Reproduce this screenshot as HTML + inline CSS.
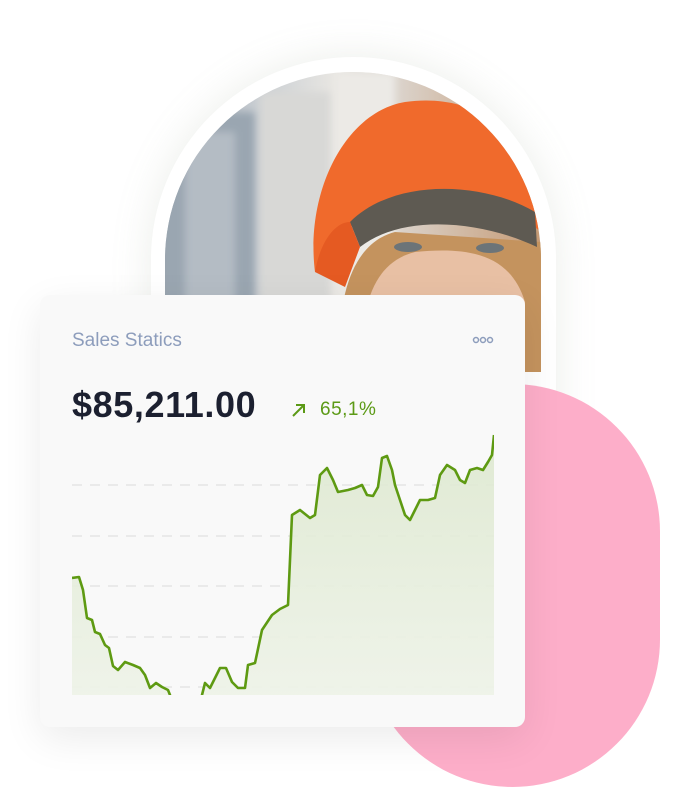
<!DOCTYPE html>
<html><head><meta charset="utf-8"><style>
body{margin:0;width:683px;height:811px;background:#fff;position:relative;overflow:hidden;font-family:"Liberation Sans",sans-serif}
.arch{position:absolute;left:151px;top:57px;width:405px;height:380px;background:#fff;border-radius:202px 202px 0 0;box-shadow:0 0 40px rgba(150,160,140,.18)}
.photo{position:absolute;left:165px;top:72px;width:376px;height:300px;border-radius:188px 188px 0 0;overflow:hidden;background:linear-gradient(90deg,#9aa3ad 0%,#c9ced3 25%,#e8e6e2 45%,#dcd6d0 60%,#c59a74 100%)}
.pink{position:absolute;left:365px;top:384px;width:295px;height:403px;border-radius:150px;background:#fdaec9}
.card{position:absolute;left:40px;top:295px;width:485px;height:432px;background:#f9f9f9;border-radius:10px;box-shadow:0 12px 40px rgba(0,0,0,.08)}
</style></head><body>
<div class="arch"></div>
<div class="photo">
<svg width="376" height="300" viewBox="0 0 376 300">
<g filter="url(#b)">
<rect x="0" y="40" width="90" height="260" fill="#9aa6b1"/>
<rect x="20" y="60" width="50" height="240" fill="#b4bcc4"/>
<rect x="95" y="20" width="70" height="280" fill="#d8d8d6"/>
<rect x="170" y="0" width="60" height="300" fill="#eceae6"/>
</g>
<defs><filter id="b"><feGaussianBlur stdDeviation="4"/></filter></defs>
<path d="M175 300 C170 220 190 170 230 160 L376 170 L376 300 Z" fill="#c4935e"/>
<path d="M195 300 C195 230 210 190 250 180 C300 175 345 180 360 230 L360 300 Z" fill="#e8c0a4"/>
<path d="M150 200 C140 120 180 40 240 30 C310 20 360 60 372 120 L376 160 C330 120 240 110 190 150 Z" fill="#f06a2c"/>
<path d="M185 150 C230 105 320 110 370 140 L372 175 C320 150 240 140 195 175 Z" fill="#5e5a52"/>
<path d="M150 200 C155 170 170 150 185 150 L195 175 L180 215 Z" fill="#e55a22"/>
<ellipse cx="243" cy="175" rx="14" ry="5" fill="#6c7478"/>
<ellipse cx="325" cy="176" rx="14" ry="5" fill="#6c7478"/>
</svg>
</div>
<div class="pink"></div>
<div class="card">
<div style="position:absolute;left:32px;top:35px;font-size:19px;color:#8d9dbc">Sales Statics</div>
<svg style="position:absolute;left:432px;top:41px" width="22" height="8"><g fill="none" stroke="#8d9dbc" stroke-width="1.5"><circle cx="4" cy="4" r="2.5"/><circle cx="11" cy="4" r="2.5"/><circle cx="18" cy="4" r="2.5"/></g></svg>
<div style="position:absolute;left:32px;top:89px;font-size:36px;font-weight:bold;color:#1c2030;letter-spacing:0.6px">$85,211.00</div>
<svg style="position:absolute;left:251px;top:107px" width="16" height="16"><path d="M2 14 L13 3 M5 3 H13 V11" fill="none" stroke="#5c9a16" stroke-width="2"/></svg>
<div style="position:absolute;left:280px;top:104px;font-size:19px;color:#5c9a16;letter-spacing:0.5px">65,1%</div>
</div>
<svg style="position:absolute;left:0;top:0" width="683" height="811">
<defs><linearGradient id="g" x1="0" y1="0" x2="0" y2="1"><stop offset="0" stop-color="#dde8cf"/><stop offset="1" stop-color="#eef3e8"/></linearGradient>
<clipPath id="c"><rect x="72" y="420" width="422" height="275"/></clipPath></defs>
<g stroke="#e6e6e6" stroke-width="1.5" stroke-dasharray="10 8"><line x1="72" y1="485" x2="494" y2="485"/><line x1="72" y1="536" x2="494" y2="536"/><line x1="72" y1="586" x2="494" y2="586"/><line x1="72" y1="637" x2="494" y2="637"/><line x1="72" y1="687" x2="494" y2="687"/></g>
<g clip-path="url(#c)">
<path id="p" d="M72 578 L79 577 L83 590 L87 618 L92 620 L95 632 L100 634 L105 645 L109 648 L113 666 L118 670 L125 662 L133 665 L140 668 L145 675 L150 688 L156 683 L162 687 L168 690 L172 700 L201 700 L202 695 L205 683 L210 688 L215 678 L220 668 L226 668 L232 682 L238 688 L245 688 L248 665 L255 663 L262 630 L272 615 L280 609 L288 605 L292 515 L300 510 L310 518 L315 515 L320 475 L327 468 L333 480 L338 492 L348 490 L355 488 L362 485 L367 495 L373 496 L378 487 L382 458 L387 456 L392 470 L395 485 L400 500 L405 515 L410 520 L415 510 L420 500 L428 500 L435 498 L440 475 L447 465 L455 470 L460 480 L465 483 L470 470 L477 468 L483 470 L488 462 L492 455 L494 435" fill="none"/>
<path d="M72 578 L79 577 L83 590 L87 618 L92 620 L95 632 L100 634 L105 645 L109 648 L113 666 L118 670 L125 662 L133 665 L140 668 L145 675 L150 688 L156 683 L162 687 L168 690 L172 700 L201 700 L202 695 L205 683 L210 688 L215 678 L220 668 L226 668 L232 682 L238 688 L245 688 L248 665 L255 663 L262 630 L272 615 L280 609 L288 605 L292 515 L300 510 L310 518 L315 515 L320 475 L327 468 L333 480 L338 492 L348 490 L355 488 L362 485 L367 495 L373 496 L378 487 L382 458 L387 456 L392 470 L395 485 L400 500 L405 515 L410 520 L415 510 L420 500 L428 500 L435 498 L440 475 L447 465 L455 470 L460 480 L465 483 L470 470 L477 468 L483 470 L488 462 L492 455 L494 435 L494 700 L72 700Z" fill="url(#g)" opacity=".9"/>
<use href="#p" stroke="#5e9a12" stroke-width="2.6" stroke-linejoin="round"/>
</g>
</svg>
</body></html>
